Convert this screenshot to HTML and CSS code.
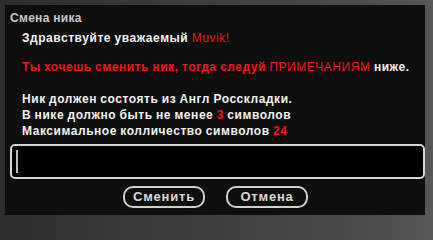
FILE: index.html
```html
<!DOCTYPE html>
<html>
<head>
<meta charset="utf-8">
<link rel="stylesheet" href="styles.css">
</head>
<body>
<div class="dialog">
  <div class="title">Смена ника</div>
  <div class="content">
    <p class="l1">Здравствуйте уважаемый <span class="red thin">Muvik!</span></p>
    <p class="l2"><span class="red">Ты хочешь сменить ник, тогда следуй</span> <span class="red thin">ПРИМЕЧАНИЯМ</span> ниже.</p>
    <div class="rules">
      <p>Ник должен состоять из Англ Росскладки.</p>
      <p>В нике должно быть не менее <span class="red">3</span> символов</p>
      <p>Максимальное колличество символов <span class="red">24</span></p>
    </div>
  </div>
  <div class="input"><span class="caret"></span></div>
  <div class="buttons">
    <div class="btn">Сменить</div>
    <div class="btn">Отмена</div>
  </div>
</div>
</body>
</html>
```
FILE: styles.css
```css
html, body {
  margin: 0;
  padding: 0;
}
body {
  width: 433px;
  height: 220px;
  overflow: hidden;
  background: linear-gradient(90deg, #2e2e2e 0%, #3c3c3c 40%, #4a4a4a 80%, #575757 100%);
  font-family: "Liberation Sans", Arial, sans-serif;
}
.dialog {
  margin: 5px 0 0 5px;
  width: 420px;
  height: 210px;
  background: #0e0e0e;
  display: flex;
  flex-direction: column;
}
.title {
  padding: 6px 0 0 5px;
  height: 18px;
  font-size: 12px;
  font-weight: bold;
  color: #c9c9c9;
  letter-spacing: 0.3px;
}
.content {
  padding-left: 17px;
  font-size: 12px;
  font-weight: bold;
  color: #f2f2f2;
  letter-spacing: 0.55px;
  word-spacing: -0.5px;
}
.content p {
  margin: 0;
  line-height: 16px;
}
.l1 {
  margin-top: 1px !important;
}
.l2 {
  margin-top: 13px !important;
}
.rules {
  margin-top: 16px;
}
.red {
  color: #f01414;
}
.thin {
  font-weight: normal;
}
.input {
  margin: 5px 0 0 5px;
  width: 407px;
  height: 31px;
  border: 2px solid #d6d6d6;
  border-radius: 5px;
  background: #000;
  display: flex;
  align-items: center;
  padding-left: 4px;
  box-sizing: content-box;
}
.caret {
  width: 2px;
  height: 23px;
  background: #bdbdbd;
}
.buttons {
  margin-top: 7px;
  display: flex;
  justify-content: center;
  gap: 21px;
  padding-left: 1px;
}
.btn {
  width: 78px;
  height: 18px;
  border: 2px solid #cfcfcf;
  border-radius: 10px;
  color: #d9d9d9;
  font-size: 13px;
  font-weight: bold;
  letter-spacing: 0.8px;
  text-align: center;
  line-height: 18px;
}
```
